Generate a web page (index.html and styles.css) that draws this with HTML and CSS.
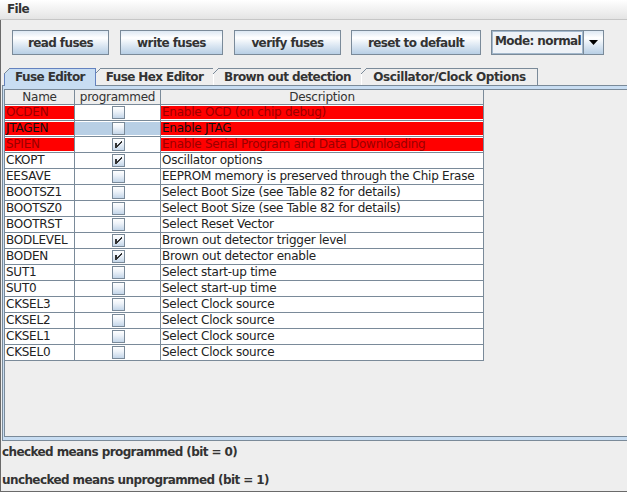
FILE: index.html
```html
<!DOCTYPE html>
<html>
<head>
<meta charset="utf-8">
<link rel="stylesheet" href="styles.css">
</head>
<body>
<div class="menubar"><span class="menu">File</span></div>
<div class="frame">
  <div class="toolbar">
    <button class="btn w-read">read fuses</button>
    <button class="btn w-write">write fuses</button>
    <button class="btn w-verify">verify fuses</button>
    <button class="btn w-reset">reset to default</button>
    <div class="combo">
      <div class="combo-text">Mode: normal</div>
      <div class="combo-arrow"><svg width="9" height="5" viewBox="0 0 9 5"><path d="M0 0H9L4.5 5Z" fill="#000"/></svg></div>
    </div>
  </div>
  <div class="tabs">
    <div class="tab sel w-t1">Fuse Editor</div>
    <div class="tab w-t2">Fuse Hex Editor</div>
    <div class="tab w-t3">Brown out detection</div>
    <div class="tab w-t4">Oscillator/Clock Options</div>
  </div>
  <div class="tabcontent">
    <div class="scroll">
      <div class="table">
        <div class="thead">
          <div class="th c1">Name</div>
          <div class="th c2">programmed</div>
          <div class="th c3">Description</div>
        </div>
        <div class="row">
          <div class="td c1"><div class="in red dark">OCDEN</div></div>
          <div class="td c2"><div class="in ctr"><span class="cb"></span></div></div>
          <div class="td c3"><div class="in red dark">Enable OCD (on chip debug)</div></div>
        </div>
        <div class="row">
          <div class="td c1"><div class="in red">JTAGEN</div></div>
          <div class="td c2"><div class="in ctr selcell"><span class="cb"></span></div></div>
          <div class="td c3"><div class="in red">Enable JTAG</div></div>
        </div>
        <div class="row">
          <div class="td c1"><div class="in red dark">SPIEN</div></div>
          <div class="td c2"><div class="in ctr"><span class="cb"><svg class="tick" width="11" height="11" viewBox="0 0 11 11"><path d="M2 4h2v5h-2z M4 6h1v2h-1z M5 5h1v2h-1z M6 4h1v2h-1z M7 3h1v2h-1z M8 2h1v2h-1z" fill="#333"/></svg></span></div></div>
          <div class="td c3"><div class="in red dark">Enable Serial Program and Data Downloading</div></div>
        </div>
        <div class="row">
          <div class="td c1"><div class="in">CKOPT</div></div>
          <div class="td c2"><div class="in ctr"><span class="cb"><svg class="tick" width="11" height="11" viewBox="0 0 11 11"><path d="M2 4h2v5h-2z M4 6h1v2h-1z M5 5h1v2h-1z M6 4h1v2h-1z M7 3h1v2h-1z M8 2h1v2h-1z" fill="#333"/></svg></span></div></div>
          <div class="td c3"><div class="in">Oscillator options</div></div>
        </div>
        <div class="row">
          <div class="td c1"><div class="in">EESAVE</div></div>
          <div class="td c2"><div class="in ctr"><span class="cb"></span></div></div>
          <div class="td c3"><div class="in">EEPROM memory is preserved through the Chip Erase</div></div>
        </div>
        <div class="row">
          <div class="td c1"><div class="in">BOOTSZ1</div></div>
          <div class="td c2"><div class="in ctr"><span class="cb"></span></div></div>
          <div class="td c3"><div class="in">Select Boot Size (see Table 82 for details)</div></div>
        </div>
        <div class="row">
          <div class="td c1"><div class="in">BOOTSZ0</div></div>
          <div class="td c2"><div class="in ctr"><span class="cb"></span></div></div>
          <div class="td c3"><div class="in">Select Boot Size (see Table 82 for details)</div></div>
        </div>
        <div class="row">
          <div class="td c1"><div class="in">BOOTRST</div></div>
          <div class="td c2"><div class="in ctr"><span class="cb"></span></div></div>
          <div class="td c3"><div class="in">Select Reset Vector</div></div>
        </div>
        <div class="row">
          <div class="td c1"><div class="in">BODLEVEL</div></div>
          <div class="td c2"><div class="in ctr"><span class="cb"><svg class="tick" width="11" height="11" viewBox="0 0 11 11"><path d="M2 4h2v5h-2z M4 6h1v2h-1z M5 5h1v2h-1z M6 4h1v2h-1z M7 3h1v2h-1z M8 2h1v2h-1z" fill="#333"/></svg></span></div></div>
          <div class="td c3"><div class="in">Brown out detector trigger level</div></div>
        </div>
        <div class="row">
          <div class="td c1"><div class="in">BODEN</div></div>
          <div class="td c2"><div class="in ctr"><span class="cb"><svg class="tick" width="11" height="11" viewBox="0 0 11 11"><path d="M2 4h2v5h-2z M4 6h1v2h-1z M5 5h1v2h-1z M6 4h1v2h-1z M7 3h1v2h-1z M8 2h1v2h-1z" fill="#333"/></svg></span></div></div>
          <div class="td c3"><div class="in">Brown out detector enable</div></div>
        </div>
        <div class="row">
          <div class="td c1"><div class="in">SUT1</div></div>
          <div class="td c2"><div class="in ctr"><span class="cb"></span></div></div>
          <div class="td c3"><div class="in">Select start-up time</div></div>
        </div>
        <div class="row">
          <div class="td c1"><div class="in">SUT0</div></div>
          <div class="td c2"><div class="in ctr"><span class="cb"></span></div></div>
          <div class="td c3"><div class="in">Select start-up time</div></div>
        </div>
        <div class="row">
          <div class="td c1"><div class="in">CKSEL3</div></div>
          <div class="td c2"><div class="in ctr"><span class="cb"></span></div></div>
          <div class="td c3"><div class="in">Select Clock source</div></div>
        </div>
        <div class="row">
          <div class="td c1"><div class="in">CKSEL2</div></div>
          <div class="td c2"><div class="in ctr"><span class="cb"></span></div></div>
          <div class="td c3"><div class="in">Select Clock source</div></div>
        </div>
        <div class="row">
          <div class="td c1"><div class="in">CKSEL1</div></div>
          <div class="td c2"><div class="in ctr"><span class="cb"></span></div></div>
          <div class="td c3"><div class="in">Select Clock source</div></div>
        </div>
        <div class="row">
          <div class="td c1"><div class="in">CKSEL0</div></div>
          <div class="td c2"><div class="in ctr"><span class="cb"></span></div></div>
          <div class="td c3"><div class="in">Select Clock source</div></div>
        </div>
      </div>
    </div>
  </div>
  <div class="notes">
    <div class="note n1">checked means programmed (bit = 0)</div>
    <div class="note n2">unchecked means unprogrammed (bit = 1)</div>
  </div>
</div>
</body>
</html>
```

FILE: styles.css
```css
* { box-sizing: border-box; }
html, body { margin: 0; padding: 0; }
body {
  width: 627px;
  height: 492px;
  overflow: hidden;
  background: #eeeeee;
  font-family: "DejaVu Sans", "Liberation Sans", sans-serif;
  font-size: 12px;
  color: #333333;
}
.menubar {
  height: 20px;
  background: linear-gradient(#ffffff, #e4e4e4);
  border-bottom: 1px solid #c6c6c6;
  display: flex;
  align-items: center;
  padding-left: 7px;
}
.menu {
  font-weight: bold;
  letter-spacing: -0.6px;
  color: #333;
  line-height: 15px;
  margin-top: -1px;
}
.frame {
  height: 472px;
  border-left: 1px solid #6a6a6a;
  border-bottom: 1px solid #6a6a6a;
  display: flex;
  flex-direction: column;
}
.toolbar {
  display: flex;
  gap: 11px;
  padding: 10px 0 0 11px;
  height: 35px;
}
.btn {
  height: 25px;
  border: 1px solid #7a8a99;
  background: linear-gradient(#dde8f3 0%, #ffffff 30%, #dde8f3 62%, #b8cfe5 100%);
  font-family: "DejaVu Sans", sans-serif;
  font-weight: bold;
  font-size: 12px;
  letter-spacing: -0.6px;
  color: #333;
  padding: 0;
  margin: 0;
}
.w-read { width: 97px; }
.w-write { width: 103px; }
.w-verify { width: 107px; }
.w-reset { width: 130px; margin-left: -1px; }
.combo {
  margin-left: -1px;
  width: 113px;
  height: 25px;
  border: 1px solid #7a8a99;
  display: flex;
}
.combo-text {
  flex: 1;
  background: #eef2f7;
  border: 1px solid #a3b8cc;
  font-weight: bold;
  letter-spacing: -0.6px;
  padding-left: 2px;
  line-height: 19px;
  color: #333;
}
.combo-arrow {
  width: 20px;
  border-left: 1px solid #7a8a99;
  background: linear-gradient(#dde8f3 0%, #ffffff 30%, #dde8f3 62%, #b8cfe5 100%);
  display: flex;
  align-items: center;
  justify-content: center;
}
.tabs {
  display: flex;
  margin-top: 13px;
  padding-left: 3px;
  height: 17px;
}
.tab {
  position: relative;
  height: 17px;
  border: 1px solid #7a8a99;
  border-bottom: none;
  border-left-color: #ffffff;
  margin-left: -1px;
  font-weight: bold;
  letter-spacing: -0.6px;
  text-align: center;
  line-height: 16px;
  color: #333;
  background: #eeeeee;
}
.tab::before {
  content: "";
  position: absolute;
  left: -1px;
  top: -1px;
  width: 6px;
  height: 6px;
  background: linear-gradient(135deg, #eeeeee 0 42%, #7a8a99 42% 58%, transparent 58%);
}
.tab.sel {
  background: #c8ddf2;
  border-color: #6382bf;
  height: 18px;
  margin-bottom: -1px;
  z-index: 1;
}
.w-t1 { width: 92px; margin-left: 0; }
.w-t2 { width: 119px; }
.w-t3 { width: 149px; }
.w-t4 { width: 177px; letter-spacing: -0.4px; }
.tabcontent {
  margin-left: 1px;
  height: 356px;
  border: 1px solid #7a8a99;
  border-right: none;
  background: #c8ddf2;
  padding: 3px 0 3px 1px;
}
.scroll {
  height: 348px;
  border: 1px solid #7a8a99;
  border-right: none;
  background: #eeeeee;
}
.table {
  width: 479px;
}
.thead {
  display: flex;
  height: 15px;
  border-bottom: 1px solid #7a8a99;
}
.th {
  border-right: 1px solid #7a8a99;
  text-align: center;
  line-height: 14px;
  color: #333;
  letter-spacing: -0.25px;
}
.c1 { width: 70px; }
.c2 { width: 86px; }
.c3 { width: 323px; }
.row {
  display: flex;
  height: 16px;
  border-bottom: 1px solid #7a8a99;
  background: #ffffff;
}
.td {
  border-right: 1px solid #7a8a99;
  padding: 1px 0;
}
.in {
  height: 13px;
  line-height: 13px;
  padding-left: 1px;
  color: #222;
  letter-spacing: -0.25px;
  white-space: nowrap;
  overflow: hidden;
}
.red { background: #ff0000; color: #111; }
.red.dark { color: #9a0000; }
.selcell { background: #b8cfe5; }
.ctr {
  display: flex;
  justify-content: center;
  align-items: center;
}
.cb {
  width: 13px;
  height: 13px;
  border: 1px solid #7a8a99;
  background: linear-gradient(#ffffff 0%, #eef3f9 40%, #c4d6e9 100%);
  display: flex;
}
.tick {
  display: block;
  shape-rendering: crispEdges;
}
.notes {
  padding-left: 1px;
}
.note {
  font-weight: bold;
  letter-spacing: -0.6px;
  line-height: 15px;
  color: #333;
}
.n1 { margin-top: 4px; }
.n2 { margin-top: 13px; }
```
